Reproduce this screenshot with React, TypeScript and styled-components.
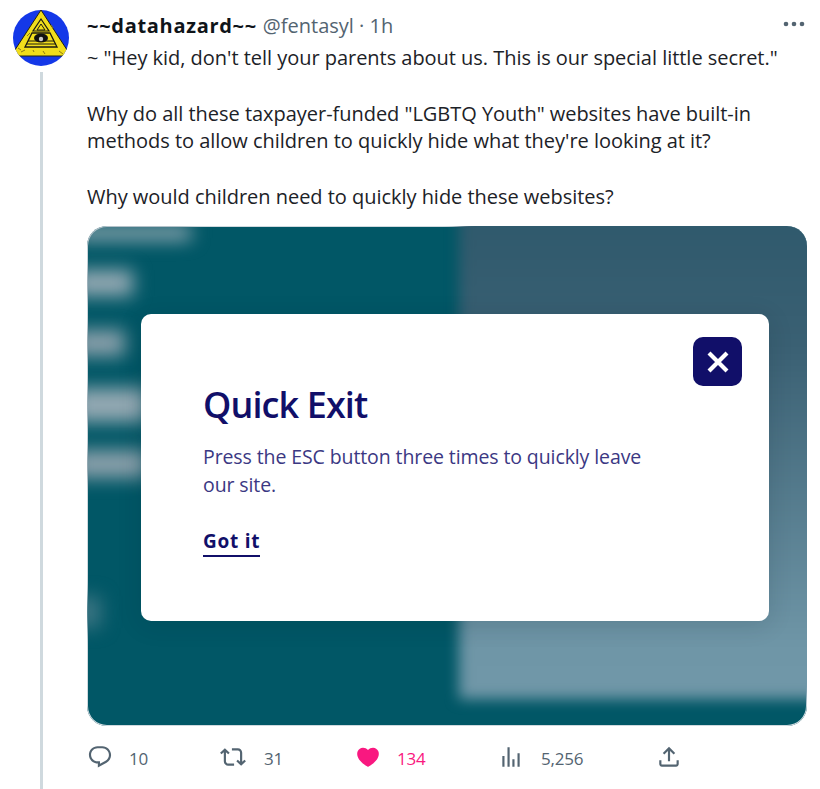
import React from 'react';
import styled, { createGlobalStyle } from 'styled-components';

const UI_FONT = `'Open Sans', 'Noto Sans', Arial, sans-serif`;

const GlobalStyle = createGlobalStyle`
  html, body {
    margin: 0;
    padding: 0;
    background: #ffffff;
  }
  body {
    font-family: ${UI_FONT};
  }
`;

const Page = styled.div`
  width: 820px;
  height: 789px;
  box-sizing: border-box;
  padding: 10px 13px 0 13px;
  display: grid;
  grid-template-columns: 56px 720px;
  column-gap: 18px;
  overflow: hidden;
`;

const Gutter = styled.div`
  display: flex;
  flex-direction: column;
  align-items: center;
  gap: 6px;
`;

const ThreadLine = styled.div`
  width: 3px;
  flex: 1;
  background: #cfd9de;
`;

const Body = styled.div`
  display: flex;
  flex-direction: column;
  min-width: 0;
`;

const Header = styled.div`
  display: flex;
  align-items: center;
  height: 34px;
  margin-top: -2px;
`;

const Name = styled.span`
  font-size: 20px;
  font-weight: 700;
  letter-spacing: 0.7px;
  color: #0f1419;
`;

const Handle = styled.span`
  font-size: 20px;
  color: #536471;
  margin-left: 6px;
`;

const More = styled.div`
  margin-left: auto;
  display: flex;
  margin-top: -2px;
  color: #536471;
`;

const TweetText = styled.div`
  font-size: 20px;
  line-height: 27.8px;
  letter-spacing: -0.03px;
  color: #1c2227;
  white-space: pre-wrap;
  margin-top: 2px;
  margin-bottom: 15.7px;
`;

const Media = styled.div`
  position: relative;
  height: 500px;
  border-radius: 20px;
  background: #015766;
  overflow: hidden;
  display: flex;
  box-shadow: inset 0 0 0 1px #cfd9de;
  padding: 88px 38px 105.5px 54px;
  box-sizing: border-box;
`;

const BlurBar = styled.div<{ $left: number; $top: number; $w: number; $h: number; $c: string }>`
  position: absolute;
  left: ${p => p.$left}px;
  top: ${p => p.$top}px;
  width: ${p => p.$w}px;
  height: ${p => p.$h}px;
  background: ${p => p.$c};
  filter: blur(9px);
`;

const BlurPanel = styled.div`
  position: absolute;
  left: 372px;
  top: -30px;
  right: -30px;
  bottom: 27px;
  background: linear-gradient(180deg, #2d586b 0%, #3a6073 30%, #6f96a7 90%, #7097a8 100%);
  filter: blur(7px);
`;

const Modal = styled.div`
  position: relative;
  flex: 1;
  background: #ffffff;
  border-radius: 10px;
  box-shadow: 0 4px 24px rgba(0, 30, 40, 0.14);
  padding: 66px 62px 0 62px;
  display: flex;
  flex-direction: column;
  align-items: flex-start;
`;

const CloseButton = styled.button`
  position: absolute;
  top: 23px;
  right: 27px;
  width: 49px;
  height: 49px;
  border: none;
  border-radius: 10px;
  padding: 0;
  background: #110f69;
  display: flex;
  align-items: center;
  justify-content: center;
`;

const ModalTitle = styled.h2`
  margin: 0 0 13px 0;
  font-size: 36px;
  line-height: 50px;
  font-weight: 600;
  letter-spacing: -0.9px;
  color: #110f69;
`;

const ModalText = styled.p`
  margin: 0 0 29px 0;
  width: 450px;
  font-size: 19.5px;
  line-height: 28px;
  letter-spacing: -0.1px;
  color: #3b3883;
`;

const GotIt = styled.a`
  font-size: 19px;
  line-height: 26px;
  font-weight: 700;
  letter-spacing: 0.75px;
  color: #110f69;
  border-bottom: 2px solid #110f69;
  padding-bottom: 1px;
`;

const Actions = styled.div`
  display: flex;
  align-items: center;
  height: 26px;
  margin-top: 18px;
`;

const Action = styled.div<{ $w: number; $c?: string; $gap?: number }>`
  width: ${p => p.$w}px;
  display: flex;
  align-items: center;
  gap: ${p => p.$gap ?? 16}px;
  color: ${p => p.$c || '#536471'};
`;

const Count = styled.span`
  font-size: 17px;
  letter-spacing: -0.2px;
  margin-top: 3px;
`;

const Icon = styled.svg`
  width: 26px;
  height: 26px;
  fill: currentColor;
  flex: none;
`;

const Avatar = () => (
  <svg width="56" height="56" viewBox="0 0 56 56">
    <defs>
      <clipPath id="av">
        <circle cx="28" cy="28" r="28" />
      </clipPath>
    </defs>
    <g clipPath="url(#av)">
      <rect width="56" height="56" fill="#1438e8" />
      <polygon points="28,0 58,46 -2,46" fill="#f0dd1c" stroke="#222210" strokeWidth="1" />
      <polygon points="28,9 36,21 20,21" fill="none" stroke="#1a1a10" strokeWidth="1.2" />
      <polygon points="28,14 32,20 24,20" fill="none" stroke="#1a1a10" strokeWidth="1" />
      <polygon points="19,23 37,23 44,37 12,37" fill="none" stroke="#1a1a10" strokeWidth="1.3" />
      <path d="M15 31h26M13 34h30" stroke="#1a1a10" strokeWidth="1" />
      <ellipse cx="28" cy="28" rx="7" ry="4.5" fill="#111" />
      <circle cx="28" cy="29" r="2.2" fill="#c8c8c8" />
      <path d="M8 42l4-2M46 41l4 3M30 41l2 3M20 40l1 2M14 26l3-3M38 15l2 3M5 38l3 2" stroke="#8a7a15" strokeWidth="1" />
    </g>
  </svg>
);

export default function App() {
  return (
    <Page>
      <GlobalStyle />
      <Gutter>
        <Avatar />
        <ThreadLine />
      </Gutter>
      <Body>
        <Header>
          <Name>~~datahazard~~</Name>
          <Handle>@fentasyl · 1h</Handle>
          <More>
            <svg width="26" height="26" viewBox="0 0 26 26" fill="currentColor">
              <circle cx="5" cy="13" r="2.3" />
              <circle cx="13" cy="13" r="2.3" />
              <circle cx="21" cy="13" r="2.3" />
            </svg>
          </More>
        </Header>
        <TweetText>
          {`~ "Hey kid, don't tell your parents about us. This is our special little secret."

Why do all these taxpayer-funded "LGBTQ Youth" websites have built-in methods to allow children to quickly hide what they're looking at it?

Why would children need to quickly hide these websites?`}
        </TweetText>
        <Media>
          <BlurPanel />
          <BlurBar $left={-14} $top={0} $w={118} $h={14} $c="#94a9b3" />
          <BlurBar $left={-14} $top={44} $w={60} $h={26} $c="#94a9b3" />
          <BlurBar $left={-14} $top={104} $w={52} $h={26} $c="#8aa0ab" />
          <BlurBar $left={-14} $top={162} $w={74} $h={34} $c="#94a9b3" />
          <BlurBar $left={-14} $top={224} $w={74} $h={28} $c="#8aa0ab" />
          <BlurBar $left={-14} $top={370} $w={28} $h={32} $c="#3a7482" />
          <Modal>
            <CloseButton aria-label="Close">
              <svg width="26" height="26" viewBox="0 0 26 26">
                <path d="M4 4l18 18M22 4L4 22" stroke="#fff" strokeWidth="4.2" />
              </svg>
            </CloseButton>
            <ModalTitle>Quick Exit</ModalTitle>
            <ModalText>Press the ESC button three times to quickly leave our site.</ModalText>
            <GotIt>Got it</GotIt>
          </Modal>
        </Media>
        <Actions>
          <Action $w={133}>
            <Icon viewBox="0 0 24 24">
              <path d="M1.751 10c0-4.42 3.584-8 8.005-8h4.366c4.49 0 8.129 3.64 8.129 8.13 0 2.96-1.607 5.68-4.196 7.11l-8.054 4.46v-3.69h-.067c-4.49.1-8.183-3.51-8.183-8.01zm8.005-6c-3.317 0-6.005 2.69-6.005 6 0 3.37 2.77 6.08 6.138 6.01l.351-.01h1.761v2.3l5.087-2.81c1.951-1.08 3.163-3.13 3.163-5.36 0-3.39-2.744-6.13-6.129-6.13H9.756z" />
            </Icon>
            <Count>10</Count>
          </Action>
          <Action $w={135} $gap={18}>
            <Icon viewBox="0 0 24 24">
              <path d="M4.5 3.88l4.432 4.14-1.364 1.46L5.5 7.55V16c0 1.1.896 2 2 2H13v2H7.5c-2.209 0-4-1.79-4-4V7.55L1.432 9.48.068 8.02 4.5 3.88zM16.5 6H11V4h5.5c2.209 0 4 1.79 4 4v8.45l2.068-1.93 1.364 1.46-4.432 4.14-4.432-4.14 1.364-1.46 2.068 1.93V8c0-1.1-.896-2-2-2z" />
            </Icon>
            <Count>31</Count>
          </Action>
          <Action $w={143} $c="#f91880">
            <Icon viewBox="0 0 24 24">
              <path d="M20.884 13.19c-1.351 2.48-4.001 5.12-8.379 7.67l-.503.3-.504-.3c-4.379-2.55-7.029-5.19-8.382-7.67-1.36-2.5-1.41-4.86-.514-6.67.887-1.79 2.647-2.91 4.601-3.01 1.651-.09 3.368.56 4.798 2.01 1.429-1.45 3.146-2.1 4.796-2.01 1.954.1 3.714 1.22 4.601 3.01.896 1.81.846 4.17-.514 6.67z" />
            </Icon>
            <Count>134</Count>
          </Action>
          <Action $w={158} $gap={17}>
            <Icon viewBox="0 0 24 24">
              <path d="M8.75 21V3h2v18h-2zM18 21V8.5h2V21h-2zM4 21l.004-10h2L6 21H4zm9.248 0v-7h2v7h-2z" />
            </Icon>
            <Count>5,256</Count>
          </Action>
          <Action $w={40}>
            <Icon viewBox="0 0 24 24">
              <path d="M12 2.59l5.7 5.7-1.41 1.42L13 6.41V16h-2V6.41l-3.3 3.3-1.41-1.42L12 2.59zM21 15l-.02 3.51c0 1.38-1.12 2.49-2.5 2.49H5.5C4.11 21 3 19.88 3 18.5V15h2v3.5c0 .28.22.5.5.5h12.98c.28 0 .5-.22.5-.5L19 15h2z" />
            </Icon>
          </Action>
        </Actions>
      </Body>
    </Page>
  );
}
